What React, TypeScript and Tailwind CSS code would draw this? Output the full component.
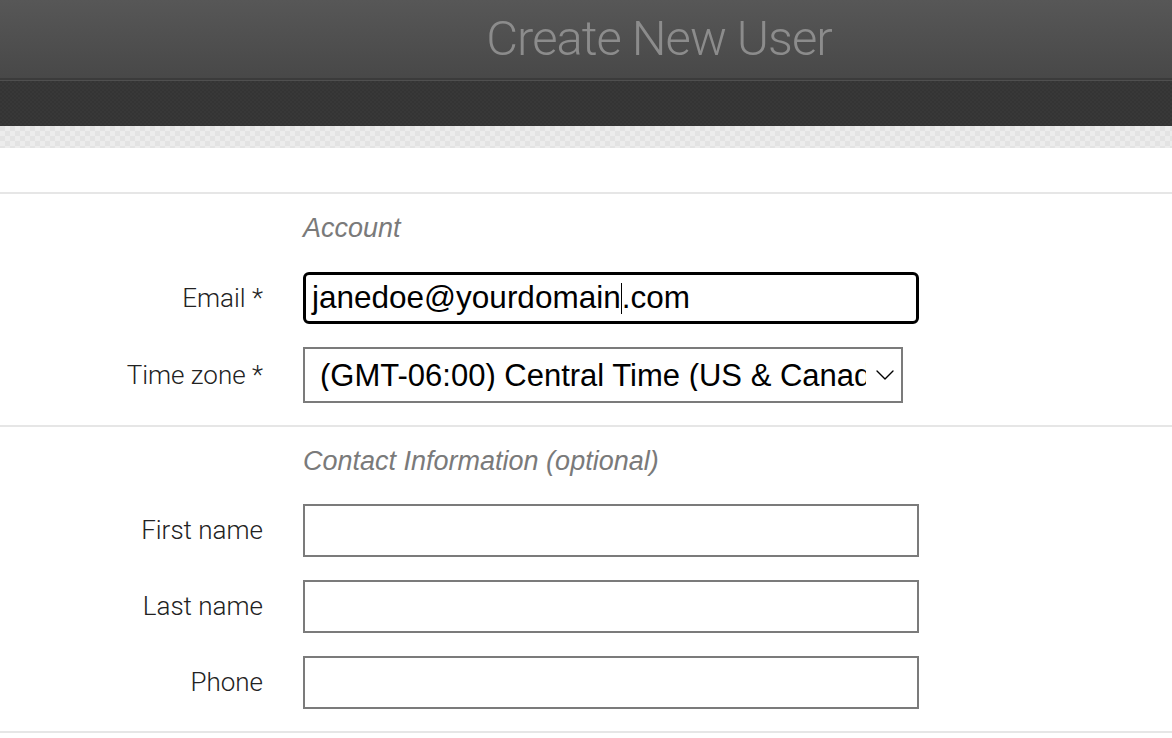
import { ChevronDown } from 'lucide-react'

const labelFont = { fontFamily: 'Roboto, "Liberation Sans", sans-serif' }
const fieldFont = { fontFamily: '"Liberation Sans", Arial, sans-serif' }

function Field({ label, children }: { label: string; children: React.ReactNode }) {
  return (
    <div className="flex items-center">
      <div className="w-[263px] text-right text-[26px] font-light text-[#222]">{label}</div>
      <div className="ml-[40px]">{children}</div>
    </div>
  )
}

function EmptyInput() {
  return <div className="w-[616px] h-[53px] border-2 border-[#7b7b7b] bg-white" />
}

function Heading({ children }: { children: React.ReactNode }) {
  return (
    <div className="pl-[303px] text-[27px] italic text-[#7a7a7a] leading-[30px]" style={fieldFont}>
      {children}
    </div>
  )
}

export default function App() {
  return (
    <div className="min-h-[738px] bg-white" style={labelFont}>
      {/* header */}
      <div className="h-[78px] bg-gradient-to-b from-[#575757] to-[#484848] flex items-center justify-center pl-[146px]">
        <h1 className="text-[49px] font-light tracking-[-1px] text-[#8c8c8c] leading-none mt-[-2px]">
          Create New User
        </h1>
      </div>
      <div className="h-[2px] bg-[#3b3b3b]" />
      <div className="h-px bg-[#4f4f4f]" />
      <div className="h-[45px] bg-[#363636] bg-[repeating-conic-gradient(#383838_0_25%,#343434_0_50%)] bg-[length:4px_4px]" />
      <div className="h-[22px] bg-[repeating-conic-gradient(#ececec_0_25%,#e3e3e3_0_50%)] bg-[length:10px_10px]" />
      <div className="h-[44px]" />

      {/* account */}
      <section className="border-t-2 border-[#e6e6e6] pt-[19px] pb-[22px]">
        <Heading>Account</Heading>
        <div className="mt-[29px] flex flex-col gap-[23px]">
          <Field label="Email *">
            <div className="w-[616px] h-[52px] border-[3px] border-black rounded-[6px] flex items-center pl-[6px] bg-white">
              <span className="text-[31.5px] text-black leading-none" style={fieldFont}>
                janedoe@yourdomain
              </span>
              <span className="w-px h-[31px] bg-black" />
              <span className="text-[31.5px] text-black leading-none" style={fieldFont}>
                .com
              </span>
            </div>
          </Field>
          <Field label="Time zone *">
            <div className="w-[600px] h-[56px] border-2 border-[#7b7b7b] flex items-center pl-[15px] bg-white">
              <span
                className="flex-1 overflow-hidden whitespace-nowrap text-[31px] text-black leading-none mr-[3px]"
                style={fieldFont}
              >
                (GMT-06:00) Central Time (US &amp; Canada)
              </span>
              <ChevronDown className="w-8 h-8 text-black shrink-0" strokeWidth={1} />
            </div>
          </Field>
        </div>
      </section>

      {/* contact */}
      <section className="border-t-2 border-b-2 border-[#e6e6e6] pt-[19px] pb-[22px]">
        <Heading>Contact Information (optional)</Heading>
        <div className="mt-[28px] flex flex-col gap-[23px]">
          <Field label="First name">
            <EmptyInput />
          </Field>
          <Field label="Last name">
            <EmptyInput />
          </Field>
          <Field label="Phone">
            <EmptyInput />
          </Field>
        </div>
      </section>
    </div>
  )
}
